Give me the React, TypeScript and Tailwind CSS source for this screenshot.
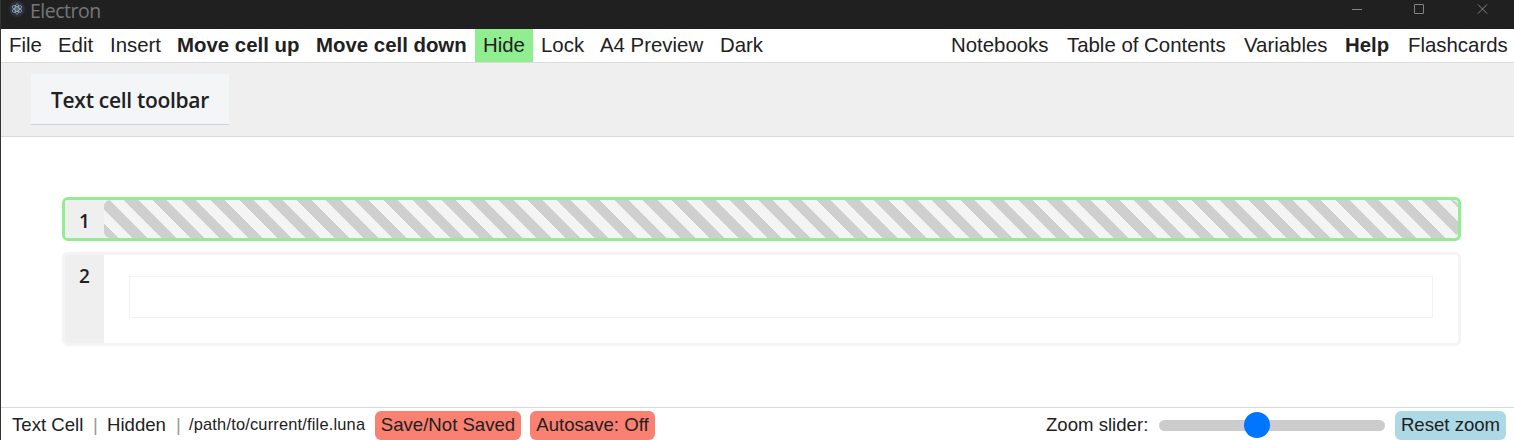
import React from "react";

const leftMenu = [
  { label: "File", cls: "w-[49px]" },
  { label: "Edit", cls: "w-[52px]" },
  { label: "Insert", cls: "w-[67px]" },
  { label: "Move cell up", cls: "w-[139px] font-bold" },
  { label: "Move cell down", cls: "w-[167px] font-bold" },
  { label: "Hide", cls: "w-[58px] bg-[#90ee90]" },
  { label: "Lock", cls: "w-[59px]" },
  { label: "A4 Preview", cls: "w-[120px]" },
  { label: "Dark", cls: "w-[60px]" },
];

const rightMenu = [
  { label: "Notebooks", cls: "w-[116px]" },
  { label: "Table of Contents", cls: "w-[177px]" },
  { label: "Variables", cls: "w-[101px]" },
  { label: "Help", cls: "w-[63px] font-bold" },
  { label: "Flashcards", cls: "w-[114px]" },
];

function MenuItem({ label, cls }: { label: string; cls: string }) {
  return (
    <button className={`h-[33px] shrink-0 whitespace-nowrap pl-2 text-left leading-[33px] ${cls}`}>
      {label}
    </button>
  );
}

function TitleBar() {
  return (
    <header className="flex h-[29px] shrink-0 items-start bg-[#202020] text-[#777]">
      <svg className="ml-2 mt-px" width="17" height="17" viewBox="0 0 17 17" fill="none">
        <circle cx="8" cy="8" r="8" fill="#2b2e3b" />
        <g stroke="#9fc5cf" strokeWidth="0.7">
          <ellipse cx="8" cy="8" rx="5.3" ry="2" transform="rotate(30 8 8)" />
          <ellipse cx="8" cy="8" rx="5.3" ry="2" transform="rotate(90 8 8)" />
          <ellipse cx="8" cy="8" rx="5.3" ry="2" transform="rotate(150 8 8)" />
        </g>
        <circle cx="8" cy="8" r="0.7" fill="#9fc5cf" />
      </svg>
      <span className="ml-1 font-['Open_Sans',sans-serif] text-[19.5px] leading-[21px] tracking-[-0.5px]">Electron</span>
      <svg className="ml-auto mr-[25px]" width="138" height="20" viewBox="0 0 138 20" fill="none" stroke="#858585">
        <path d="M1 9.5h10" />
        <rect x="63.5" y="4.5" width="9" height="9" rx="0.5" />
        <path d="M127 4.5l9 9M136 4.5l-9 9" />
      </svg>
    </header>
  );
}

export default function App() {
  return (
    <div className="flex h-[440px] w-full flex-col overflow-hidden border-l border-[#333] bg-white font-['Liberation_Sans',sans-serif] text-[#212121]">
      <TitleBar />
      <nav className="flex h-[34px] shrink-0 justify-between border-b border-[#dadada] text-[20.4px]">
        <div className="flex">
          {leftMenu.map((m) => (
            <MenuItem key={m.label} {...m} />
          ))}
        </div>
        <div className="flex">
          {rightMenu.map((m) => (
            <MenuItem key={m.label} {...m} />
          ))}
        </div>
      </nav>
      <section className="h-[74px] shrink-0 border-b border-[#dadada] bg-[#efefef] pl-[30px] pt-[11px]">
        <button className="flex h-[51px] w-[198px] items-center justify-center border-b border-[#ccd3dc] bg-[#f4f5f7] pt-[3px] font-['Open_Sans',sans-serif] text-[21px] font-semibold tracking-[-0.3px]">
          Text cell toolbar
        </button>
      </section>
      <main className="flex flex-1 flex-col gap-[11px] pl-[61px] pr-[53px] pt-[60px]">
        <div className="flex h-11 overflow-hidden rounded-[6px] border-[3px] border-[#90ee90] bg-[#f4f4f4]">
          <div className="w-[39px] shrink-0 bg-[#efefef] pt-[7px] text-center font-['Open_Sans',sans-serif] text-[19px] font-semibold leading-7">
            1
          </div>
          <div className="flex-1 rounded-[6px] bg-[repeating-linear-gradient(45deg,#cfcfcf,#cfcfcf_10.2px,#f4f4f4_10.2px,#f4f4f4_20.4px)]" />
        </div>
        <div className="flex h-[94px] overflow-hidden rounded-[6px] border-[3px] border-[#f4f4f4]">
          <div className="w-[39px] shrink-0 bg-[#efefef] pt-[7px] text-center font-['Open_Sans',sans-serif] text-[19px] font-semibold leading-7">
            2
          </div>
          <div className="flex-1 py-[21px] pl-[25px] pr-[25px]">
            <div className="h-[42px] border border-[#f2f2f2]" />
          </div>
        </div>
      </main>
      <footer className="flex h-[33px] shrink-0 items-center border-t border-[#dadada] pl-[11px] pr-2 text-[18.6px]">
        <span className="w-[81px] whitespace-nowrap pt-px">Text Cell</span>
        <span className="w-[14px] pt-px text-[#999]">|</span>
        <span className="w-[69px] pt-px">Hidden</span>
        <span className="w-[13px] pt-px text-[#999]">|</span>
        <span className="w-[186px] whitespace-nowrap text-[16.4px] tracking-[0.19px]">/path/to/current/file.luna</span>
        <button className="mt-[2px] h-[29px] w-[146px] whitespace-nowrap rounded-[6px] bg-[#fa8072] pb-px leading-[26px]">Save/Not Saved</button>
        <button className="ml-[9px] mt-[2px] h-[29px] w-[125px] whitespace-nowrap rounded-[6px] bg-[#fa8072] pb-px leading-[26px]">Autosave: Off</button>
        <span className="ml-auto w-[113px] whitespace-nowrap pt-px">Zoom slider:</span>
        <div className="mt-[2px] flex h-[11px] w-[226px] items-center rounded-full bg-[#ccc] pl-[85px]">
          <div className="h-[26px] w-[26px] shrink-0 rounded-full bg-[#0075ff]" />
        </div>
        <button className="ml-[10px] mt-[2px] h-[29px] w-[111px] whitespace-nowrap rounded-[6px] bg-[#add8e6] pb-px leading-[26px]">Reset zoom</button>
      </footer>
    </div>
  );
}
